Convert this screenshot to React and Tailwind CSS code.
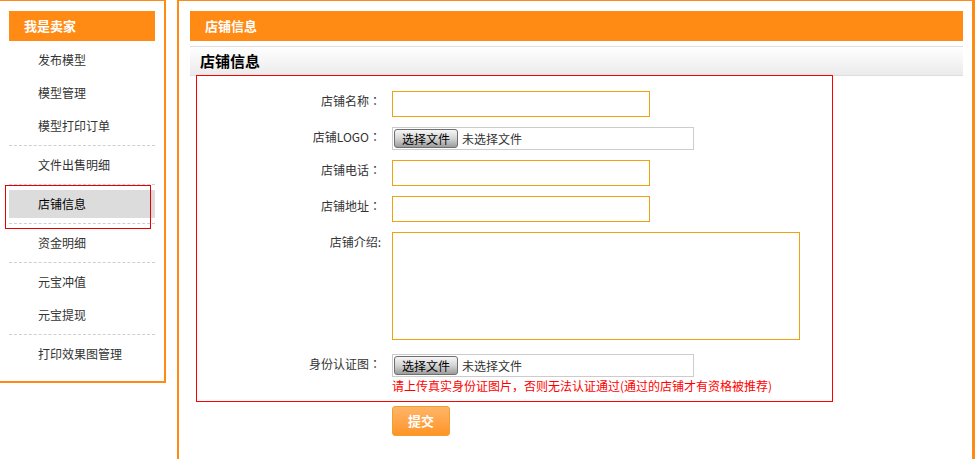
import React from "react";

const ORANGE = "border-[#ff8a14]";

function MenuItem({ children, active }) {
  return (
    <div
      className={
        "h-[28px] pl-[29px] flex items-center text-[12px] " +
        (active ? "bg-[#dcdcdc] text-black" : "text-[#333]")
      }
    >
      {children}
    </div>
  );
}

function Group({ children, last }) {
  return (
    <div
      className={
        "flex flex-col gap-[5px] py-[5px] " +
        (last ? "" : "border-b border-dashed border-[#cfcfcf]")
      }
    >
      {children}
    </div>
  );
}

function FileInput() {
  return (
    <div className="ml-[11px] w-[302px] h-[23px] border border-[#cccccc] bg-white flex items-center pl-[1px]">
      <div className="h-[19px] w-[64px] border border-[#6f6f6f] rounded-[3px] bg-gradient-to-b from-[#f7f7f7] via-[#d4d4d4] to-[#9c9c9c] flex items-center justify-center text-[12px] text-black leading-none">
        选择文件
      </div>
      <span className="ml-[4px] text-[12px] text-[#333]">未选择文件</span>
    </div>
  );
}

function Label({ children, colon = true }) {
  return (
    <div className="w-[184px] shrink-0 text-right leading-[20px] text-[12px] text-[#333]">
      {children}
      {colon ? (
        <span className="font-['Noto_Sans_CJK_JP',sans-serif]">：</span>
      ) : null}
    </div>
  );
}

export default function App() {
  return (
    <div className="w-[975px] h-[459px] overflow-hidden bg-white flex items-start font-['Noto_Sans_CJK_SC','Noto_Sans',sans-serif]">
      {/* Left sidebar */}
      <div className={"relative shrink-0 w-[166px] h-[383px] border-t border-r-2 border-b-2 " + ORANGE + " px-[9px] pt-[10px]"}>
        <div className="h-[30px] bg-[#ff8a14] pl-[15px] flex items-center text-white font-bold text-[13px]">
          我是卖家
        </div>
        <Group>
          <MenuItem>发布模型</MenuItem>
          <MenuItem>模型管理</MenuItem>
          <MenuItem>模型打印订单</MenuItem>
        </Group>
        <Group>
          <MenuItem>文件出售明细</MenuItem>
        </Group>
        <Group>
          <MenuItem active>店铺信息</MenuItem>
        </Group>
        <Group>
          <MenuItem>资金明细</MenuItem>
        </Group>
        <Group>
          <MenuItem>元宝冲值</MenuItem>
          <MenuItem>元宝提现</MenuItem>
        </Group>
        <Group last>
          <MenuItem>打印效果图管理</MenuItem>
        </Group>
        <div className="absolute left-[5px] top-[184px] w-[146px] h-[44px] border border-[#e60000]" />
      </div>

      {/* Right main panel */}
      <div className={"shrink-0 ml-[11px] w-[798px] h-[480px] border-t border-l-2 border-r-[3px] " + ORANGE + " pl-[11px] pr-[9px] pt-[10px]"}>
        <div className="h-[30px] bg-[#ff8a14] pl-[15px] flex items-center text-white font-bold text-[13px]">
          店铺信息
        </div>
        <div className="mt-[5px] h-[30px] border-y border-[#dedede] bg-gradient-to-b from-white to-[#ebebeb] pl-[10px] flex items-center font-bold text-[15px] text-black">
          店铺信息
        </div>

        <div className="ml-[6px] -mt-px w-[637px] border border-[#ff0000] pt-[15px] pb-[7px] flex flex-col">
          <div className="flex items-start">
            <Label>店铺名称</Label>
            <input className="ml-[11px] w-[258px] h-[26px] border border-[#eea20f] outline-none" />
          </div>
          <div className="flex items-start mt-[10px]">
            <Label>店铺LOGO</Label>
            <FileInput />
          </div>
          <div className="flex items-start mt-[10px]">
            <Label>店铺电话</Label>
            <input className="ml-[11px] w-[258px] h-[26px] border border-[#eea20f] outline-none" />
          </div>
          <div className="flex items-start mt-[10px]">
            <Label>店铺地址</Label>
            <input className="ml-[11px] w-[258px] h-[26px] border border-[#eea20f] outline-none" />
          </div>
          <div className="flex items-start mt-[10px]">
            <Label colon={false}>店铺介绍:</Label>
            <textarea className="ml-[11px] w-[408px] h-[108px] border border-[#eea20f] outline-none resize-none" />
          </div>
          <div className="flex items-start mt-[14px]">
            <Label>身份认证图</Label>
            <FileInput />
          </div>
          <div className="ml-[195px] mt-[1px] text-[12px] leading-[16px] text-[#ff0000]">
            请上传真实身份证图片<span className="font-['Noto_Sans_CJK_JP',sans-serif]">，</span>否则无法认证通过(通过的店铺才有资格被推荐)
          </div>
        </div>

        <div className="ml-[202px] mt-[4px] w-[58px] h-[30px] rounded-[3px] border border-[#f0a030] bg-gradient-to-b from-[#ffb566] to-[#ff9421] flex items-center justify-center text-white font-bold text-[13px]">
          提交
        </div>
      </div>
    </div>
  );
}
